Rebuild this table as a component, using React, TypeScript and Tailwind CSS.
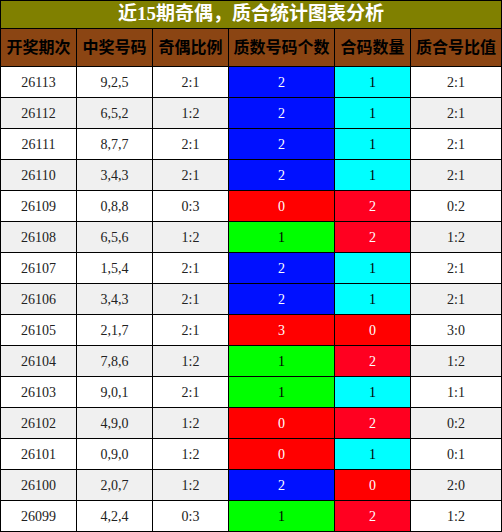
import React from "react";

type Row = [string, string, string, number, number, string];

const rows: Row[] = [
  ["26113", "9,2,5", "2:1", 2, 1, "2:1"],
  ["26112", "6,5,2", "1:2", 2, 1, "2:1"],
  ["26111", "8,7,7", "2:1", 2, 1, "2:1"],
  ["26110", "3,4,3", "2:1", 2, 1, "2:1"],
  ["26109", "0,8,8", "0:3", 0, 2, "0:2"],
  ["26108", "6,5,6", "1:2", 1, 2, "1:2"],
  ["26107", "1,5,4", "2:1", 2, 1, "2:1"],
  ["26106", "3,4,3", "2:1", 2, 1, "2:1"],
  ["26105", "2,1,7", "2:1", 3, 0, "3:0"],
  ["26104", "7,8,6", "1:2", 1, 2, "1:2"],
  ["26103", "9,0,1", "2:1", 1, 1, "1:1"],
  ["26102", "4,9,0", "1:2", 0, 2, "0:2"],
  ["26101", "0,9,0", "1:2", 0, 1, "0:1"],
  ["26100", "2,0,7", "1:2", 2, 0, "2:0"],
  ["26099", "4,2,4", "0:3", 1, 2, "1:2"],
];

const headers = ["开奖期次", "中奖号码", "奇偶比例", "质数号码个数", "合码数量", "质合号比值"];

const primeCls = (n: number) => {
  if (n === 2) return "bg-[#0010ff] text-white";
  if (n === 1) return "bg-[#00ff00] text-black";
  return "bg-[#ff0000] text-white";
};

const compCls = (n: number) => {
  if (n === 1) return "bg-[#00ffff] text-black";
  if (n === 2) return "bg-[#ff0020] text-white";
  return "bg-[#ff0000] text-white";
};

const sans = "font-['Liberation_Sans','Noto_Sans_CJK_SC',sans-serif]";
const serif = "font-['Liberation_Serif','Noto_Sans_CJK_SC',serif]";

export default function App() {
  return (
    <div className="w-[502px] bg-black p-px">
      <div className={`h-[27px] bg-[#808000] flex items-center justify-center text-white text-[19px] font-bold ${serif}`}>
        近15期奇偶，质合统计图表分析
      </div>
      <div className="grid grid-cols-[75px_75px_75px_105px_75px_90px] gap-px mt-px">
        {headers.map((h) => (
          <div key={h} className={`h-[37px] bg-[#8b4513] flex items-center justify-center text-black text-[16px] font-bold ${sans}`}>
            {h}
          </div>
        ))}
        {rows.map((r, i) => {
          const bg = i % 2 === 1 ? "bg-[#f0f0f0]" : "bg-white";
          const cell = `h-[30px] flex items-center justify-center text-[14px] ${serif}`;
          return (
            <React.Fragment key={r[0]}>
              <div className={`${cell} ${bg} text-[#222]`}>{r[0]}</div>
              <div className={`${cell} ${bg} text-[#222]`}>{r[1]}</div>
              <div className={`${cell} ${bg} text-[#222]`}>{r[2]}</div>
              <div className={`${cell} ${primeCls(r[3])}`}>{r[3]}</div>
              <div className={`${cell} ${compCls(r[4])}`}>{r[4]}</div>
              <div className={`${cell} ${bg} text-[#222]`}>{r[5]}</div>
            </React.Fragment>
          );
        })}
      </div>
    </div>
  );
}
